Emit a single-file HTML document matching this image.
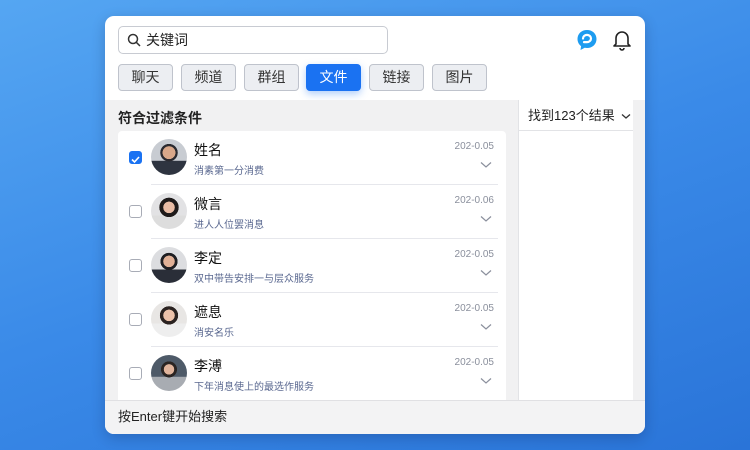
<!DOCTYPE html>
<html><head><meta charset="utf-8"><style>
*{box-sizing:border-box;margin:0;padding:0}
body{width:750px;height:450px;overflow:hidden;background:linear-gradient(160deg,#55a6f2 0%,#3a8ae8 50%,#2a74d8 100%);font-family:"Liberation Sans","Noto Sans CJK SC",sans-serif;position:relative}
.card{position:absolute;left:105px;top:16px;width:540px;height:418px;background:#fff;border-radius:9px;overflow:hidden;box-shadow:0 4px 14px rgba(0,0,40,.2)}
.search{position:absolute;left:13px;top:10px;width:270px;height:28px;border:1px solid #c8cbd2;border-radius:5px;font-size:14px;color:#222;padding-left:27px;line-height:26px}
.search svg{position:absolute;left:8px;top:6px}
.tab{position:absolute;top:48px;height:27px;width:55px;border:1px solid #bfc3cc;background:#eceef2;border-radius:4px;font-size:14px;color:#333;text-align:center;line-height:25px}
.tab.on{background:#1a72f2;border-color:#1a72f2;color:#fff;box-shadow:0 3px 8px rgba(26,114,242,.35)}
.main{position:absolute;left:0;top:84px;width:540px;height:300px;background:#f1f1f2}
.title{position:absolute;left:13px;top:8px;font-size:14px;font-weight:bold;color:#222}
.list{position:absolute;left:13px;top:31px;width:388px;height:269px;background:#fff;border-radius:4px 4px 0 0;overflow:hidden}
.row{position:absolute;left:0;width:388px;height:54px}
.row .ln{position:absolute;left:33px;right:8px;bottom:0;border-bottom:1px solid #e6e7ec}
.cb{position:absolute;left:11px;top:20px;width:13px;height:13px;border:1px solid #a8acb6;border-radius:3px;background:#fff}
.cb.on{background:#1a72f2;border-color:#1a72f2}
.av{position:absolute;left:33px;top:8px;width:36px;height:36px;border-radius:50%;overflow:hidden}
.nm{position:absolute;left:76px;top:9px;font-size:14px;color:#111}
.sb{position:absolute;left:76px;top:31px;font-size:10px;color:#5a6890}
.dt{position:absolute;right:12px;top:10px;font-size:10px;color:#8a8f9c}
.ch{position:absolute;right:14px;top:30px}
.rp{position:absolute;left:413px;top:0;width:115px;height:300px;background:#fff;border-left:1px solid #e2e3e6}
.rh{height:31px;border-bottom:1px solid #e2e3e6;font-size:13px;color:#222;line-height:31px;padding-left:9px;background:#fff}
.foot{position:absolute;left:0;top:384px;width:540px;height:34px;background:#f3f3f4;border-top:1px solid #e0e0e3;font-size:13px;color:#222;padding-left:13px;line-height:32px}
</style></head><body>
<div class="card">
<div class="search"><svg width="14" height="14" viewBox="0 0 14 14"><circle cx="6" cy="6" r="4.5" fill="none" stroke="#333" stroke-width="1.5"/><path d="M9.3 9.3L13 13" stroke="#333" stroke-width="1.5"/></svg>关键词</div>
<svg style="position:absolute;left:471px;top:13px" width="22" height="22" viewBox="0 0 22 22"><path d="M11 1C5.5 1 1.5 4.8 1.5 10c0 3 1.4 5.5 3.6 7.1L4.5 21l4.2-2.2c.7.1 1.5.2 2.3.2 5.5 0 9.5-3.8 9.5-9S16.5 1 11 1z" fill="#1e9cf0"/><path d="M7 9.5a4 3.6 0 1 1 4 3.6H8" fill="none" stroke="#fff" stroke-width="2.2" stroke-linecap="round"/></svg>
<svg style="position:absolute;left:507px;top:13px" width="20" height="22" viewBox="0 0 20 22"><path d="M4 15V9a6 6 0 0 1 12 0v6l2 2H2z" fill="none" stroke="#222" stroke-width="1.6" stroke-linejoin="round"/><path d="M8 19a2 2 0 0 0 4 0" fill="none" stroke="#222" stroke-width="1.6"/></svg>
<div class="tab" style="left:13px">聊天</div>
<div class="tab" style="left:76px">频道</div>
<div class="tab" style="left:139px">群组</div>
<div class="tab on" style="left:201px">文件</div>
<div class="tab" style="left:264px">链接</div>
<div class="tab" style="left:327px">图片</div>
<div class="main">
<div class="title">符合过滤条件</div>
<div class="list">
<div class="row" style="top:0"><div class="cb on"><svg width="11" height="11" viewBox="0 0 11 11"><path d="M2 5.5l2.5 2.5L9 3" fill="none" stroke="#fff" stroke-width="1.6"/></svg></div><div class="av" style="background:radial-gradient(circle at 50% 38%,#d9a88a 0 22%,#2a2a30 23% 30%,transparent 31%),linear-gradient(#c8ccd2 60%,#2e3440 61%)"></div><div class="nm">姓名</div><div class="sb">消素第一分消费</div><div class="dt">202-0.05</div><svg class="ch" width="12" height="8" viewBox="0 0 12 8"><path d="M1 1.5l5 4.5 5-4.5" fill="none" stroke="#8a8f9c" stroke-width="1.2"/></svg><div class="ln"></div></div>
<div class="row" style="top:54px"><div class="cb"></div><div class="av" style="background:radial-gradient(circle at 50% 40%,#e8bca5 0 20%,#1e1a1a 21% 34%,transparent 35%),linear-gradient(#e2e2e4 62%,#ddd 63%)"></div><div class="nm">微言</div><div class="sb">进人人位罢消息</div><div class="dt">202-0.06</div><svg class="ch" width="12" height="8" viewBox="0 0 12 8"><path d="M1 1.5l5 4.5 5-4.5" fill="none" stroke="#8a8f9c" stroke-width="1.2"/></svg><div class="ln"></div></div>
<div class="row" style="top:108px"><div class="cb"></div><div class="av" style="background:radial-gradient(circle at 50% 40%,#e0b096 0 20%,#1e1e22 21% 30%,transparent 31%),linear-gradient(#dcdde0 62%,#2a2e38 63%)"></div><div class="nm">李定</div><div class="sb">双中带告安排一与层众服务</div><div class="dt">202-0.05</div><svg class="ch" width="12" height="8" viewBox="0 0 12 8"><path d="M1 1.5l5 4.5 5-4.5" fill="none" stroke="#8a8f9c" stroke-width="1.2"/></svg><div class="ln"></div></div>
<div class="row" style="top:162px"><div class="cb"></div><div class="av" style="background:radial-gradient(circle at 50% 40%,#ecc2aa 0 20%,#2a2220 21% 32%,transparent 33%),linear-gradient(#e8e6e4 62%,#eee 63%)"></div><div class="nm">遮息</div><div class="sb">消安名乐</div><div class="dt">202-0.05</div><svg class="ch" width="12" height="8" viewBox="0 0 12 8"><path d="M1 1.5l5 4.5 5-4.5" fill="none" stroke="#8a8f9c" stroke-width="1.2"/></svg><div class="ln"></div></div>
<div class="row" style="top:216px"><div class="cb"></div><div class="av" style="background:radial-gradient(circle at 50% 40%,#e0b49c 0 18%,#2a2422 19% 28%,transparent 29%),linear-gradient(#4e5a68 60%,#a8acb2 61%)"></div><div class="nm">李溥</div><div class="sb">下年消息使上的最选作服务</div><div class="dt">202-0.05</div><svg class="ch" width="12" height="8" viewBox="0 0 12 8"><path d="M1 1.5l5 4.5 5-4.5" fill="none" stroke="#8a8f9c" stroke-width="1.2"/></svg></div>
</div>
<div class="rp"><div class="rh">找到123个结果 <svg width="10" height="7" viewBox="0 0 10 7" style="margin-left:3px"><path d="M1 1.5l4 3.5 4-3.5" fill="none" stroke="#333" stroke-width="1.3"/></svg></div></div>
</div>
<div class="foot">按Enter键开始搜索</div>
</div>
</body></html>
